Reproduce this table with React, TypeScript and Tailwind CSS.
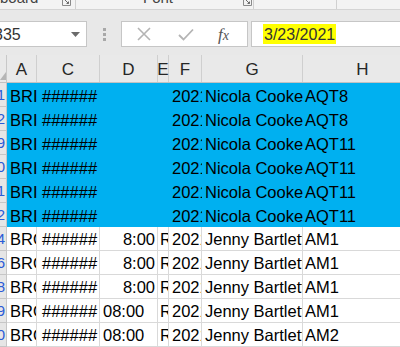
import React from "react";

const widths = [30, 63, 58, 11, 33, 101, 120];
const heads = ["A", "C", "D", "E", "F", "G", "H"];

type Row = {
  n: string;
  blue: boolean;
  a: string;
  c: string;
  d: string;
  dRight: boolean;
  e: string;
  f: string;
  g: string;
  h: string;
};

const rows: Row[] = [
  { n: "1", blue: true, a: "BRISTOL", c: "######", d: "", dRight: true, e: "", f: "2021", g: "Nicola Cooke", h: "AQT8" },
  { n: "2", blue: true, a: "BRISTOL", c: "######", d: "", dRight: true, e: "", f: "2021", g: "Nicola Cooke", h: "AQT8" },
  { n: "9", blue: true, a: "BRISTOL", c: "######", d: "", dRight: true, e: "", f: "2021", g: "Nicola Cooke", h: "AQT11" },
  { n: "0", blue: true, a: "BRISTOL", c: "######", d: "", dRight: true, e: "", f: "2021", g: "Nicola Cooke", h: "AQT11" },
  { n: "1", blue: true, a: "BRISTOL", c: "######", d: "", dRight: true, e: "", f: "2021", g: "Nicola Cooke", h: "AQT11" },
  { n: "2", blue: true, a: "BRISTOL", c: "######", d: "", dRight: true, e: "", f: "2021", g: "Nicola Cooke", h: "AQT11" },
  { n: "4", blue: false, a: "BROMLEY", c: "######", d: "8:00", dRight: true, e: "Room", f: "2021", g: "Jenny Bartlett", h: "AM1" },
  { n: "6", blue: false, a: "BROMLEY", c: "######", d: "8:00", dRight: true, e: "Room", f: "2021", g: "Jenny Bartlett", h: "AM1" },
  { n: "8", blue: false, a: "BROMLEY", c: "######", d: "8:00", dRight: true, e: "Room", f: "2021", g: "Jenny Bartlett", h: "AM1" },
  { n: "9", blue: false, a: "BROMLEY", c: "######", d: "08:00", dRight: false, e: "Room", f: "2021", g: "Jenny Bartlett", h: "AM1" },
  { n: "0", blue: false, a: "BROMLEY", c: "######", d: "08:00", dRight: false, e: "Room", f: "2021", g: "Jenny Bartlett", h: "AM2" },
];

function Launcher() {
  return (
    <svg width="9" height="7" viewBox="0 0 9 7" className="block">
      <path d="M0.5 0 V5.5 H8.5 V0" fill="none" stroke="#8a8a8a" strokeWidth="1" />
      <path d="M3 0 L6.5 3.5 M6.5 1.5 V3.5 H4.5" fill="none" stroke="#6a6a6a" strokeWidth="1" />
    </svg>
  );
}

function Cell({
  w,
  blue,
  right,
  pad,
  children,
}: {
  w: number;
  blue: boolean;
  right?: boolean;
  pad: string;
  children: React.ReactNode;
}) {
  return (
    <div
      className={
        "h-full shrink-0 overflow-hidden whitespace-nowrap flex items-center " +
        (right ? "justify-end " : "") +
        (blue ? "" : "border-r border-b border-[#d9d9d9] ") +
        pad
      }
      style={{ width: w }}
    >
      <span className="pt-[2px]">{children}</span>
    </div>
  );
}

export default function App() {
  return (
    <div className="w-[400px] h-[347px] overflow-hidden bg-[#e8e8e8] font-['Liberation_Sans',Arial,sans-serif] flex flex-col">
      {/* ribbon bottom */}
      <div className="h-[10px] shrink-0 bg-[#f3f3f3] border-b border-[#d4d4d4] flex text-[15px] text-[#444] overflow-hidden">
        <div className="w-[62px] shrink-0 overflow-hidden">
          <div className="mt-[-10px] leading-[15px]">board</div>
        </div>
        <div className="w-[13px] shrink-0 pt-0">
          <Launcher />
        </div>
        <div className="w-px h-full bg-[#d0d0d0] shrink-0" />
        <div className="w-[67px] shrink-0" />
        <div className="w-[100px] shrink-0 overflow-hidden">
          <div className="mt-[-10px] leading-[15px]">Font</div>
        </div>
        <div className="w-[10px] shrink-0">
          <Launcher />
        </div>
        <div className="w-px h-full bg-[#d0d0d0] shrink-0" />
        <div className="w-[82px] shrink-0" />
        <div className="w-px h-full bg-[#d0d0d0] shrink-0" />
      </div>

      {/* formula bar */}
      <div className="h-[45px] shrink-0 bg-[#e8e8e8] flex items-start pt-[11px]">
        <div className="ml-[-1px] w-[88px] h-[26px] shrink-0 bg-white border border-[#c6c6c6] flex items-center overflow-hidden">
          <span className="ml-[-6px] text-[16px] text-[#333] pt-[1px]">335</span>
          <div className="flex-1" />
          <svg width="9" height="5" viewBox="0 0 9 5" className="mr-[6px]">
            <path d="M0 0 H9 L4.5 5 Z" fill="#6b6b6b" />
          </svg>
        </div>
        <div className="w-[34px] h-[26px] shrink-0 flex items-center justify-center">
          <svg width="3" height="13" viewBox="0 0 3 13">
            <rect x="0" y="0" width="3" height="3" fill="#a8a8a8" />
            <rect x="0" y="5" width="3" height="3" fill="#a8a8a8" />
            <rect x="0" y="10" width="3" height="3" fill="#a8a8a8" />
          </svg>
        </div>
        <div className="w-[127px] h-[26px] shrink-0 bg-white border border-[#c6c6c6] flex items-center">
          <svg width="14" height="14" viewBox="0 0 14 14" className="ml-[15px]">
            <path d="M1 1 L13 13 M13 1 L1 13" stroke="#b4b4b4" strokeWidth="1.6" />
          </svg>
          <svg width="16" height="13" viewBox="0 0 16 13" className="ml-[27px]">
            <path d="M1 7 L5.5 11.5 L15 1.5" fill="none" stroke="#b4b4b4" strokeWidth="1.8" />
          </svg>
          <span className="ml-[24px] text-[17px] italic text-[#555] font-['Liberation_Serif',serif] leading-none">
            f<span className="text-[14px]">x</span>
          </span>
        </div>
        <div className="ml-[3px] flex-1 h-[26px] bg-white border border-[#c6c6c6] border-r-0 flex items-center">
          <span className="ml-[11px] bg-[#ffff00] text-[16px] text-[#333] leading-[19px] px-[1px] pt-[1px]">
            3/23/2021
          </span>
        </div>
      </div>

      {/* column header */}
      <div className="h-[28px] shrink-0 flex bg-[#e9e9e9] border-b border-[#c2c2c2] text-[17px] text-[#262626]">
        <div className="w-[7px] shrink-0 border-r border-[#c8c8c8] flex items-end justify-end">
          <svg width="6" height="8" viewBox="0 0 6 8" className="mb-[2px]">
            <path d="M6 0 V8 H0 Z" fill="#b5b5b5" />
          </svg>
        </div>
        {heads.map((h, i) => (
          <div
            key={h}
            className="shrink-0 border-r border-[#cfcfcf] flex items-center justify-center pt-[3px]"
            style={{ width: widths[i] }}
          >
            {h}
          </div>
        ))}
      </div>

      {/* rows */}
      <div className="flex flex-col text-[16.5px] text-black">
        {rows.map((r, i) => (
          <div key={i} className={"h-[24px] shrink-0 flex " + (r.blue ? "bg-[#00b0f0]" : "bg-white")}>
            <div className="w-[7px] shrink-0 bg-[#e6e6e6] border-r border-b border-[#c6c6c6] overflow-hidden flex items-center justify-end text-[15px] text-[#2a5bd7] pt-[2px] pr-[1px]">
              {r.n}
            </div>
            <Cell w={widths[0]} blue={r.blue} pad="pl-[3px]">
              {r.a}
            </Cell>
            <Cell w={widths[1]} blue={r.blue} pad="pl-[5px]">
              {r.c}
            </Cell>
            <Cell w={widths[2]} blue={r.blue} right={r.dRight} pad={r.dRight ? "pr-[2px]" : "pl-[3px]"}>
              {r.d}
            </Cell>
            <Cell w={widths[3]} blue={r.blue} pad="pl-[2px]">
              {r.e}
            </Cell>
            <Cell w={widths[4]} blue={r.blue} pad="pl-[3px]">
              {r.f}
            </Cell>
            <Cell w={widths[5]} blue={r.blue} pad="pl-[3px]">
              {r.g}
            </Cell>
            <Cell w={widths[6]} blue={r.blue} pad="pl-[2px]">
              {r.h}
            </Cell>
          </div>
        ))}
      </div>
    </div>
  );
}
